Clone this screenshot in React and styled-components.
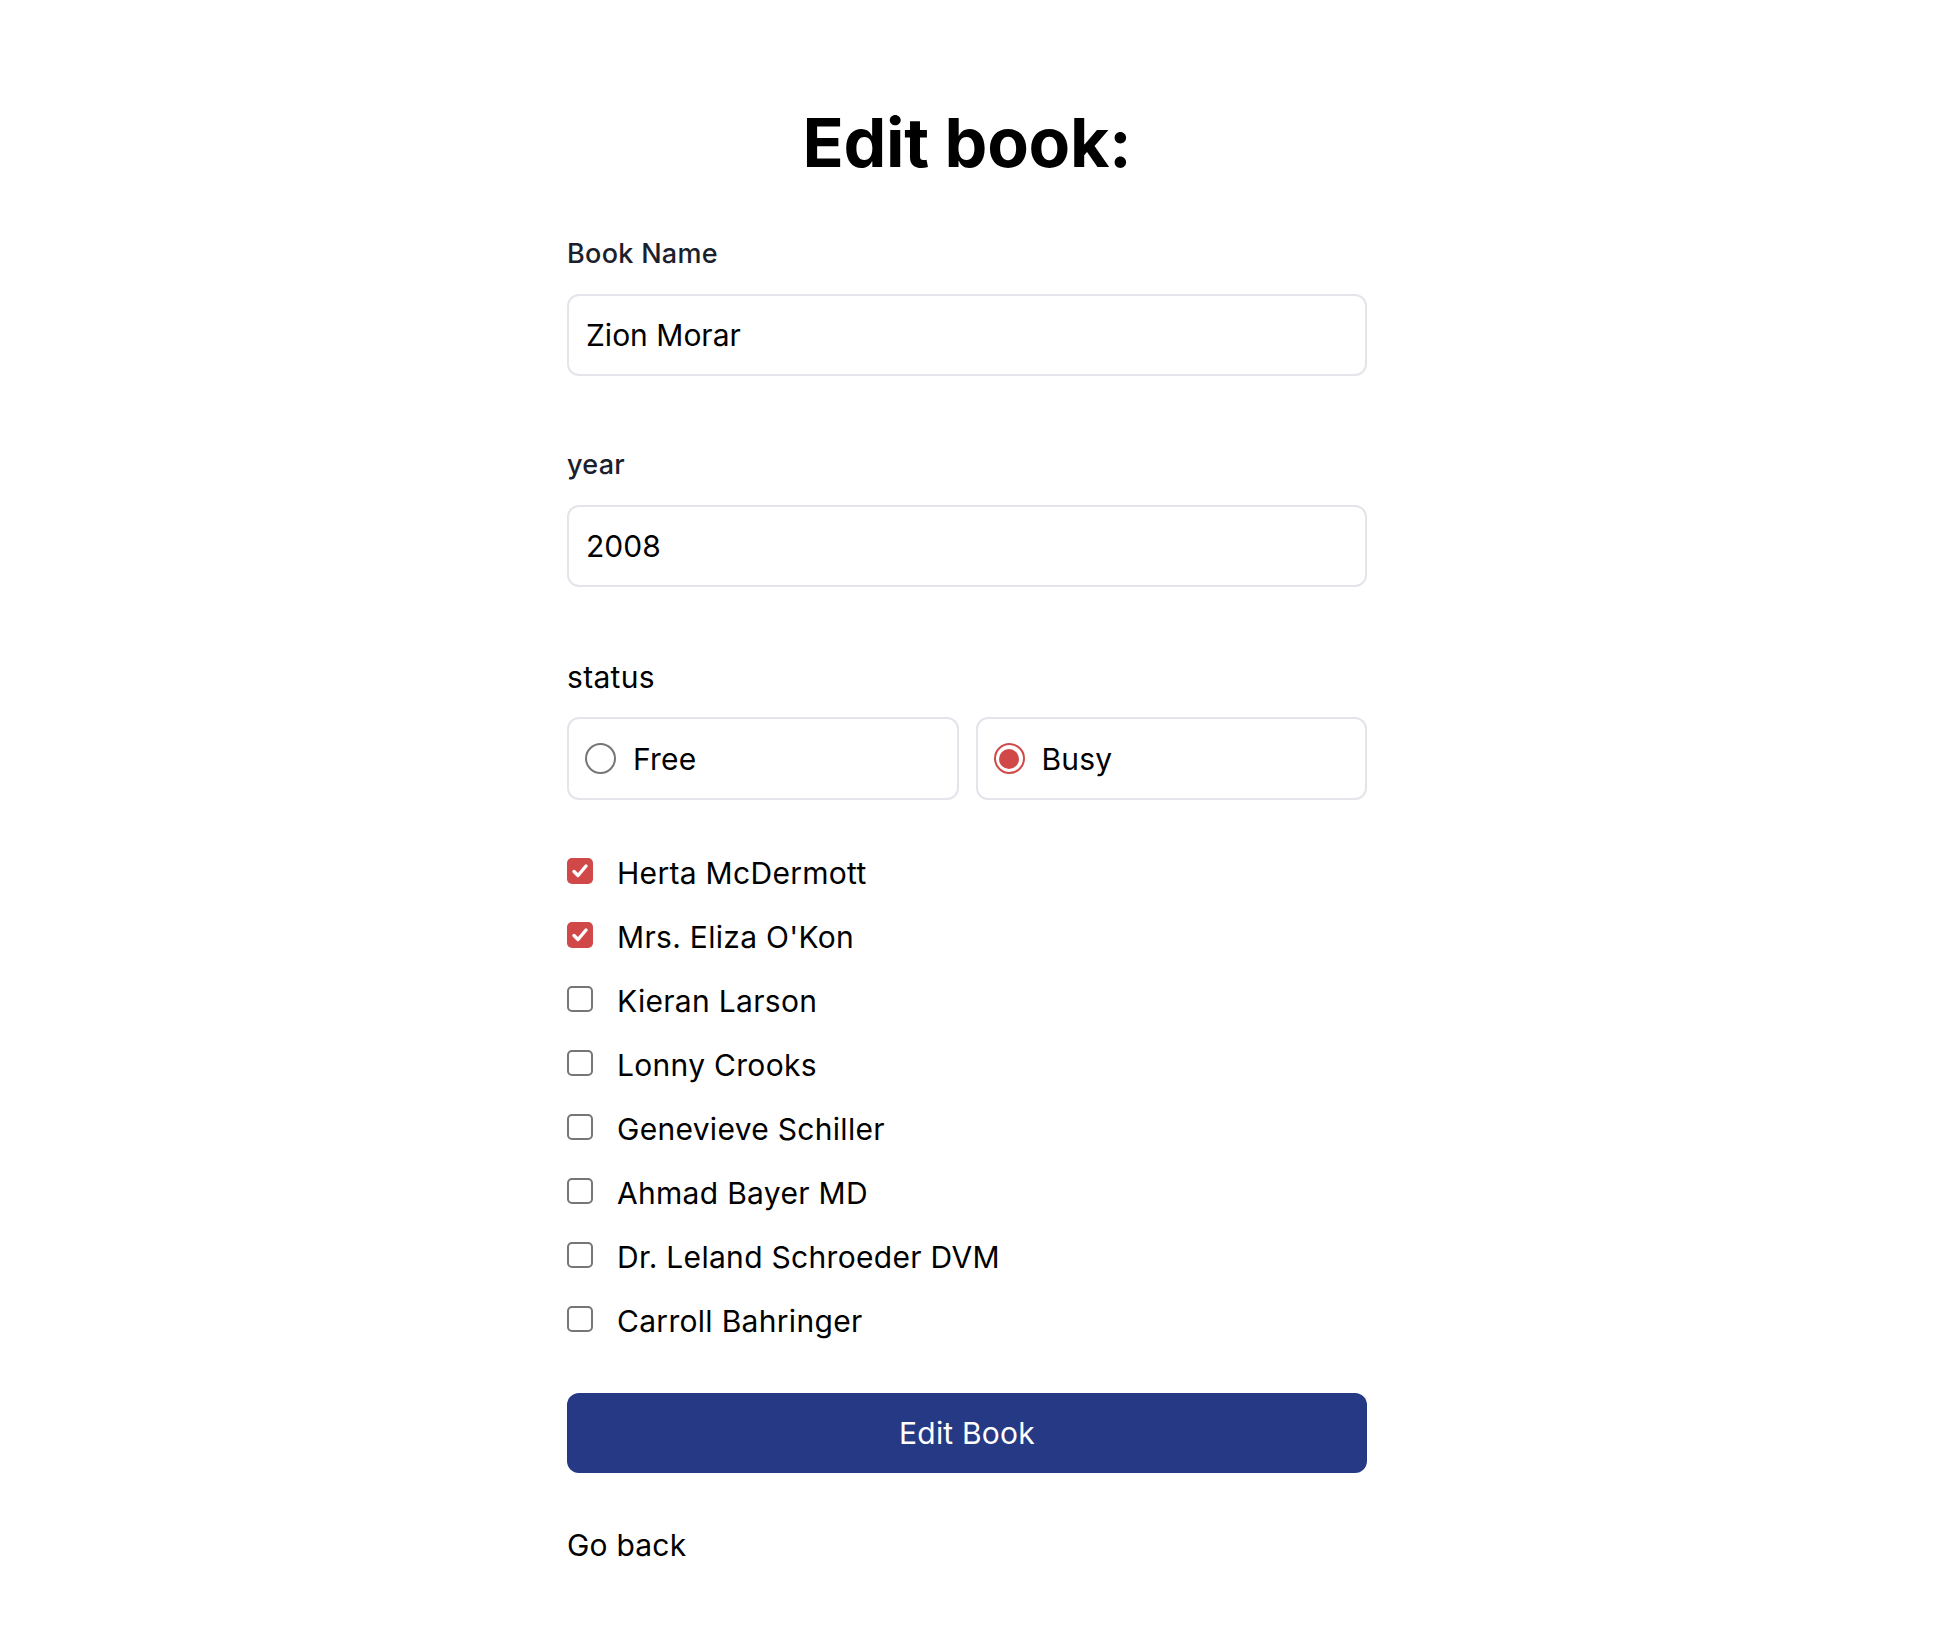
import React from "react";
import styled, { createGlobalStyle } from "styled-components";

const GlobalStyle = createGlobalStyle`
  html, body {
    margin: 0;
    padding: 0;
    background: #ffffff;
    font-family: Inter, "Noto Sans", "Liberation Sans", sans-serif;
    color: #000;
  }
  * { box-sizing: border-box; }
`;

const Page = styled.main`
  width: 800px;
  margin: 0 auto;
  padding-top: 102px;
  padding-bottom: 80px;
  display: flex;
  flex-direction: column;
`;

const Title = styled.h1`
  margin: 0 0 57px;
  font-size: 68px;
  line-height: 80px;
  font-weight: 700;
  text-align: center;
  letter-spacing: -0.3px;
  color: #000;
`;

const Form = styled.form`
  display: flex;
  flex-direction: column;
`;

const Field = styled.div`
  display: flex;
  flex-direction: column;
  gap: 25px;
  margin-bottom: ${(p) => p.$after ?? 74}px;
`;

const Label = styled.label`
  font-size: ${(p) => (p.$plain ? 30 : 27)}px;
  line-height: 30px;
  font-weight: ${(p) => (p.$plain ? 400 : 500)};
  letter-spacing: 0.3px;
  color: ${(p) => (p.$plain ? "#000" : "#1a202c")};
`;

const TextInput = styled.input`
  height: 82px;
  width: 100%;
  border: 2px solid #e4e4ea;
  border-radius: 12px;
  padding: 0 17px;
  font-family: inherit;
  font-size: 30px;
  color: #000;
  background: #fff;
  outline: none;
`;

const RadioGrid = styled.div`
  display: grid;
  grid-template-columns: 1fr 1fr;
  gap: 17px;
`;

const RadioCard = styled.label`
  height: 83px;
  border: 2px solid #e4e4ea;
  border-radius: 12px;
  padding: 0 16px;
  display: flex;
  align-items: center;
  gap: 17px;
  font-size: 30px;
  letter-spacing: 0.2px;
  color: #000;
  cursor: pointer;
`;

const RadioDot = styled.span`
  width: 31px;
  height: 31px;
  border-radius: 50%;
  border: ${(p) => (p.$checked ? "2.5px solid #d04848" : "2px solid #767676")};
  display: flex;
  align-items: center;
  justify-content: center;
  flex-shrink: 0;
  &::after {
    content: "";
    width: 20px;
    height: 20px;
    border-radius: 50%;
    background: ${(p) => (p.$checked ? "#d04848" : "transparent")};
  }
`;

const CheckList = styled.div`
  display: flex;
  flex-direction: column;
  margin-top: 41px;
`;

const CheckRow = styled.label`
  height: 64px;
  display: flex;
  align-items: center;
  gap: 24px;
  font-size: 30px;
  line-height: 64px;
  letter-spacing: 0.3px;
  color: #000;
  cursor: pointer;
`;

const CheckBox = styled.span`
  width: 26px;
  height: 26px;
  margin-bottom: 5px;
  border-radius: 5px;
  flex-shrink: 0;
  display: flex;
  align-items: center;
  justify-content: center;
  background: ${(p) => (p.$checked ? "#d04848" : "#fff")};
  border: ${(p) => (p.$checked ? "none" : "2px solid #767676")};
`;

const SubmitButton = styled.button`
  margin-top: 40px;
  height: 80px;
  width: 100%;
  border: none;
  border-radius: 12px;
  background: #263984;
  color: #fff;
  font-family: inherit;
  font-size: 30px;
  font-weight: 400;
  letter-spacing: 0.2px;
  cursor: pointer;
`;

const BackLink = styled.a`
  margin-top: 57px;
  font-size: 30px;
  line-height: 30px;
  letter-spacing: 0.2px;
  color: #000;
  text-decoration: none;
  align-self: flex-start;
`;

const authors = [
  { name: "Herta McDermott", checked: true },
  { name: "Mrs. Eliza O'Kon", checked: true },
  { name: "Kieran Larson", checked: false },
  { name: "Lonny Crooks", checked: false },
  { name: "Genevieve Schiller", checked: false },
  { name: "Ahmad Bayer MD", checked: false },
  { name: "Dr. Leland Schroeder DVM", checked: false },
  { name: "Carroll Bahringer", checked: false },
];

const Check = () => (
  <svg width="20" height="20" viewBox="0 0 20 20" fill="none">
    <path
      d="M4 10.5 L8 14.5 L16 5"
      stroke="#fff"
      strokeWidth="3.4"
      strokeLinecap="round"
      strokeLinejoin="round"
    />
  </svg>
);

export default function App() {
  return (
    <>
      <GlobalStyle />
      <Page>
        <Title>Edit book:</Title>
        <Form onSubmit={(e) => e.preventDefault()}>
          <Field>
            <Label>Book Name</Label>
            <TextInput defaultValue="Zion Morar" />
          </Field>
          <Field $after={75}>
            <Label>year</Label>
            <TextInput defaultValue="2008" />
          </Field>
          <Field $after={0}>
            <Label $plain>status</Label>
            <RadioGrid>
              <RadioCard>
                <RadioDot />
                Free
              </RadioCard>
              <RadioCard>
                <RadioDot $checked />
                Busy
              </RadioCard>
            </RadioGrid>
          </Field>
          <CheckList>
            {authors.map((a) => (
              <CheckRow key={a.name}>
                <CheckBox $checked={a.checked}>{a.checked && <Check />}</CheckBox>
                {a.name}
              </CheckRow>
            ))}
          </CheckList>
          <SubmitButton type="submit">Edit Book</SubmitButton>
          <BackLink href="#">Go back</BackLink>
        </Form>
      </Page>
    </>
  );
}
